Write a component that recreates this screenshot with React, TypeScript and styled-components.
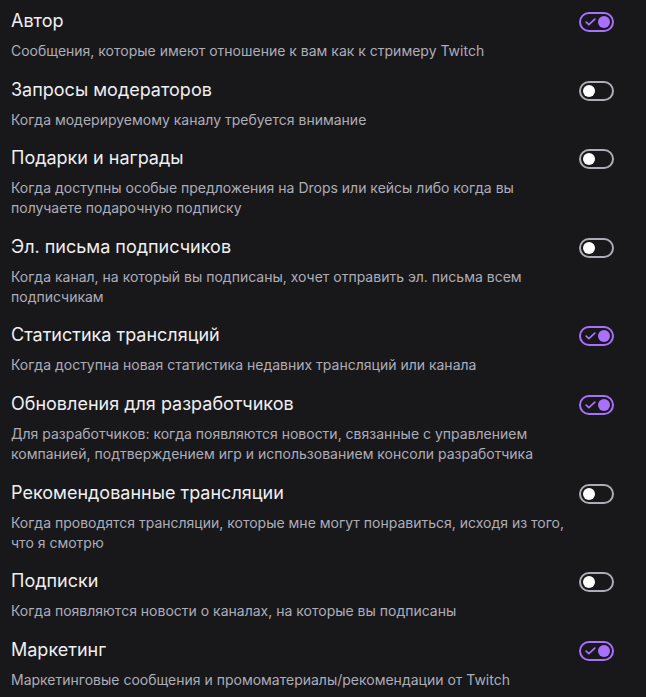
import { useState } from "react";
import styled, { createGlobalStyle } from "styled-components";

const GlobalStyle = createGlobalStyle`
  html, body {
    margin: 0;
    padding: 0;
    background: #18181b;
  }
  body {
    font-family: Inter, "Noto Sans", sans-serif;
    color: #efeff1;
  }
`;

const List = styled.div`
  display: flex;
  flex-direction: column;
  padding: 7px 32px 0 11px;
`;

const Row = styled.div`
  display: flex;
  align-items: flex-start;
  gap: 12px;
  padding-bottom: 14.6px;
`;

const TextBlock = styled.div`
  flex: 1;
  display: flex;
  flex-direction: column;
  gap: 7px;
`;

const Title = styled.div`
  font-size: 18px;
  line-height: 27px;
  font-weight: 400;
  color: #efeff1;
`;

const Description = styled.div`
  font-size: 14px;
  line-height: 20px;
  color: #adadb8;
`;

const ToggleButton = styled.button<{ $on: boolean }>`
  flex: none;
  position: relative;
  margin-top: 5px;
  width: 35px;
  height: 20px;
  border-radius: 10px;
  border: 2px solid ${(p) => (p.$on ? "#a970ff" : "#adadb8")};
  background: #18181b;
  cursor: pointer;
  display: flex;
  align-items: center;
  justify-content: ${(p) => (p.$on ? "flex-end" : "flex-start")};
  padding: 0 2px;
  box-sizing: border-box;
`;

const Knob = styled.span<{ $on: boolean }>`
  width: 12px;
  height: 12px;
  border-radius: 50%;
  background: ${(p) => (p.$on ? "#a970ff" : "#ffffff")};
`;

const Check = styled.svg`
  position: absolute;
  left: 4px;
  top: 50%;
  transform: translateY(-50%);
`;

const Toggle = ({ initial }: { initial: boolean }) => {
  const [on, setOn] = useState(initial);
  return (
    <ToggleButton type="button" $on={on} onClick={() => setOn(!on)}>
      {on && (
        <Check width="11" height="9" viewBox="0 0 11 9">
          <path
            d="M1.2 4.6 L3.9 7.2 L9.8 1.6"
            fill="none"
            stroke="#a970ff"
            strokeWidth="1.7"
            strokeLinecap="round"
            strokeLinejoin="round"
          />
        </Check>
      )}
      <Knob $on={on} />
    </ToggleButton>
  );
};

const items = [
  {
    title: "Автор",
    text: "Сообщения, которые имеют отношение к вам как к стримеру Twitch",
    on: true,
  },
  {
    title: "Запросы модераторов",
    text: "Когда модерируемому каналу требуется внимание",
    on: false,
  },
  {
    title: "Подарки и награды",
    text: "Когда доступны особые предложения на Drops или кейсы либо когда вы получаете подарочную подписку",
    on: false,
  },
  {
    title: "Эл. письма подписчиков",
    text: "Когда канал, на который вы подписаны, хочет отправить эл. письма всем подписчикам",
    on: false,
  },
  {
    title: "Статистика трансляций",
    text: "Когда доступна новая статистика недавних трансляций или канала",
    on: true,
  },
  {
    title: "Обновления для разработчиков",
    text: "Для разработчиков: когда появляются новости, связанные с управлением компанией, подтверждением игр и использованием консоли разработчика",
    on: true,
  },
  {
    title: "Рекомендованные трансляции",
    text: "Когда проводятся трансляции, которые мне могут понравиться, исходя из того, что я смотрю",
    on: false,
  },
  {
    title: "Подписки",
    text: "Когда появляются новости о каналах, на которые вы подписаны",
    on: false,
  },
  {
    title: "Маркетинг",
    text: "Маркетинговые сообщения и промоматериалы/рекомендации от Twitch",
    on: true,
  },
];

export default function App() {
  return (
    <>
      <GlobalStyle />
      <List>
        {items.map((item) => (
          <Row key={item.title}>
            <TextBlock>
              <Title>{item.title}</Title>
              <Description>{item.text}</Description>
            </TextBlock>
            <Toggle initial={item.on} />
          </Row>
        ))}
      </List>
    </>
  );
}
